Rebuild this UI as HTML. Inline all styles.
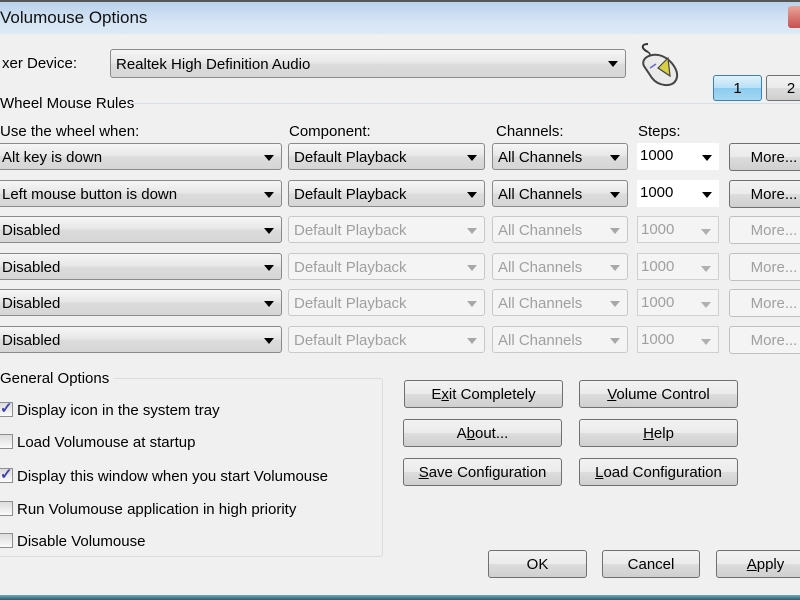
<!DOCTYPE html>
<html><head><style>
*{box-sizing:border-box;margin:0;padding:0}
body{width:800px;height:600px;overflow:hidden;background:#f0f0f0;font-family:"Liberation Sans",sans-serif;font-size:14px;color:#000;position:relative}
.a{position:absolute;white-space:nowrap}
.title{left:0;top:0;width:800px;height:34px;background:linear-gradient(#b9d1ea,#d6e5f5 60%,#dce9f6);border-top:2px solid #555}
.cb{position:absolute;height:27px;border:1px solid #8a8a8a;border-radius:3px;background:linear-gradient(#f6f6f6,#e6e6e6 50%,#dcdcdc 51%,#d6d6d6);padding-left:5px;line-height:27px;font-size:15px}
.cb::after{content:"";position:absolute;right:7px;top:11px;border-left:5.5px solid transparent;border-right:5.5px solid transparent;border-top:6px solid #000}
.dis{background:#f4f4f4;border-color:#c8c8c8;color:#a0a0a0}
.dis::after{border-top-color:#a8a8a8}
.st{position:absolute;height:27px;background:#fff;padding-left:3px;line-height:25px;font-size:15px}
.st::after{content:"";position:absolute;right:7px;top:12px;border-left:5.5px solid transparent;border-right:5.5px solid transparent;border-top:6px solid #000}
.st.dis{background:#f4f4f4;border:1px solid #d0d0d0;color:#a0a0a0}
.st.dis::after{border-top-color:#b0b0b0}
.btn{position:absolute;height:28px;border:1px solid #707070;border-radius:3px;background:linear-gradient(#f2f2f2,#ebebeb 50%,#dddddd 51%,#cfcfcf);text-align:center;line-height:27px;font-size:15px}
.btn.dis{background:#f4f4f4;border-color:#c0c0c0;color:#a0a0a0}
.chk{position:absolute;left:-1px;width:14px;height:15px;border:1px solid #8f8f8f;background:linear-gradient(#dcdcdc,#fbfbfb)}
.lbl{position:absolute;left:17px;font-size:15px}
</style></head><body>
<div class="a title"></div>
<div class="a" style="left:0;top:8px;font-size:17px;color:#111">Volumouse Options</div>
<div class="a" style="left:788px;top:6px;width:14px;height:22px;background:linear-gradient(#e8a598,#c75050);border-radius:3px"></div>

<div class="a" style="left:2px;top:55px;font-size:15px">xer Device:</div>
<div class="cb" style="left:110px;top:49px;width:516px;height:29px;line-height:29px">Realtek High Definition Audio</div>

<svg class="a" style="left:638px;top:42px" width="44" height="46" viewBox="0 0 44 46">
<path d="M10 10 C2 6 4 2 10 2" fill="none" stroke="#333" stroke-width="2"/>
<path d="M10 10 C16 14 6 16 8 22" fill="none" stroke="#333" stroke-width="1.5"/>
<path d="M6 24 C2 16 14 10 24 14 C34 18 42 30 38 38 C34 46 20 44 14 36 Z" fill="#eaeaea" stroke="#444" stroke-width="2"/>
<path d="M12 26 L18 22" stroke="#66c" stroke-width="1.5"/>
<path d="M20 26 L30 16 L32 34 Z" fill="#d8d040" stroke="#444" stroke-width="1.2"/>
</svg>

<div class="btn" style="left:713px;top:75px;width:49px;height:26px;line-height:25px;background:linear-gradient(#e0f2fb,#b8e0f6 50%,#8ccbee 51%,#a6d8f3);border-color:#3c7fb1">1</div>
<div class="btn" style="left:766px;top:75px;width:50px;height:26px;line-height:25px">2</div>

<div class="a" style="left:0;top:95px;font-size:15px">Wheel Mouse Rules</div>
<div class="a" style="left:130px;top:103px;width:680px;height:1px;background:#d5dfe5"></div>

<div class="a" style="left:0;top:123px;font-size:15px">Use the wheel when:</div>
<div class="a" style="left:289px;top:123px;font-size:15px">Component:</div>
<div class="a" style="left:496px;top:123px;font-size:15px">Channels:</div>
<div class="a" style="left:638px;top:123px;font-size:15px">Steps:</div>

<div class="cb" style="left:-4px;top:143px;width:286px">Alt key is down</div>
<div class="cb" style="left:288px;top:143px;width:197px">Default Playback</div>
<div class="cb" style="left:492px;top:143px;width:136px">All Channels</div>
<div class="st" style="left:637px;top:143px;width:82px">1000</div>
<div class="btn" style="left:729px;top:143px;width:90px">More...</div>

<div class="cb" style="left:-4px;top:180px;width:286px">Left mouse button is down</div>
<div class="cb" style="left:288px;top:180px;width:197px">Default Playback</div>
<div class="cb" style="left:492px;top:180px;width:136px">All Channels</div>
<div class="st" style="left:637px;top:180px;width:82px">1000</div>
<div class="btn" style="left:729px;top:180px;width:90px">More...</div>

<div class="cb" style="left:-4px;top:216px;width:286px">Disabled</div>
<div class="cb dis" style="left:288px;top:216px;width:197px">Default Playback</div>
<div class="cb dis" style="left:492px;top:216px;width:136px">All Channels</div>
<div class="st dis" style="left:637px;top:216px;width:82px">1000</div>
<div class="btn dis" style="left:729px;top:216px;width:90px">More...</div>

<div class="cb" style="left:-4px;top:253px;width:286px">Disabled</div>
<div class="cb dis" style="left:288px;top:253px;width:197px">Default Playback</div>
<div class="cb dis" style="left:492px;top:253px;width:136px">All Channels</div>
<div class="st dis" style="left:637px;top:253px;width:82px">1000</div>
<div class="btn dis" style="left:729px;top:253px;width:90px">More...</div>

<div class="cb" style="left:-4px;top:289px;width:286px">Disabled</div>
<div class="cb dis" style="left:288px;top:289px;width:197px">Default Playback</div>
<div class="cb dis" style="left:492px;top:289px;width:136px">All Channels</div>
<div class="st dis" style="left:637px;top:289px;width:82px">1000</div>
<div class="btn dis" style="left:729px;top:289px;width:90px">More...</div>

<div class="cb" style="left:-4px;top:326px;width:286px">Disabled</div>
<div class="cb dis" style="left:288px;top:326px;width:197px">Default Playback</div>
<div class="cb dis" style="left:492px;top:326px;width:136px">All Channels</div>
<div class="st dis" style="left:637px;top:326px;width:82px">1000</div>
<div class="btn dis" style="left:729px;top:326px;width:90px">More...</div>

<div class="a" style="left:-6px;top:378px;width:389px;height:179px;border:1px solid #dcdcdc;border-radius:3px"></div>
<div class="a" style="left:0;top:370px;font-size:15px;background:#f0f0f0;padding-right:4px">General Options</div>

<div class="chk" style="top:402px"></div><div class="a" style="left:0;top:399px;color:#4040b0;font-size:15px;font-weight:bold">✓</div><div class="lbl" style="top:402px">Display icon in the system tray</div>
<div class="chk" style="top:434px"></div><div class="lbl" style="top:434px">Load Volumouse at startup</div>
<div class="chk" style="top:468px"></div><div class="a" style="left:0;top:465px;color:#4040b0;font-size:15px;font-weight:bold">✓</div><div class="lbl" style="top:468px">Display this window when you start Volumouse</div>
<div class="chk" style="top:501px"></div><div class="lbl" style="top:501px">Run Volumouse application in high priority</div>
<div class="chk" style="top:533px"></div><div class="lbl" style="top:533px">Disable Volumouse</div>

<div class="btn" style="left:404px;top:380px;width:159px">E<u>x</u>it Completely</div>
<div class="btn" style="left:579px;top:380px;width:159px"><u>V</u>olume Control</div>
<div class="btn" style="left:403px;top:419px;width:159px">A<u>b</u>out...</div>
<div class="btn" style="left:579px;top:419px;width:159px"><u>H</u>elp</div>
<div class="btn" style="left:403px;top:458px;width:159px"><u>S</u>ave Configuration</div>
<div class="btn" style="left:579px;top:458px;width:159px"><u>L</u>oad Configuration</div>

<div class="btn" style="left:488px;top:550px;width:99px">OK</div>
<div class="btn" style="left:602px;top:550px;width:98px">Cancel</div>
<div class="btn" style="left:716px;top:550px;width:99px"><u>A</u>pply</div>

<div class="a" style="left:0;top:595px;width:800px;height:5px;background:linear-gradient(#6fa9b8,#2a5f70)"></div>
</body></html>
